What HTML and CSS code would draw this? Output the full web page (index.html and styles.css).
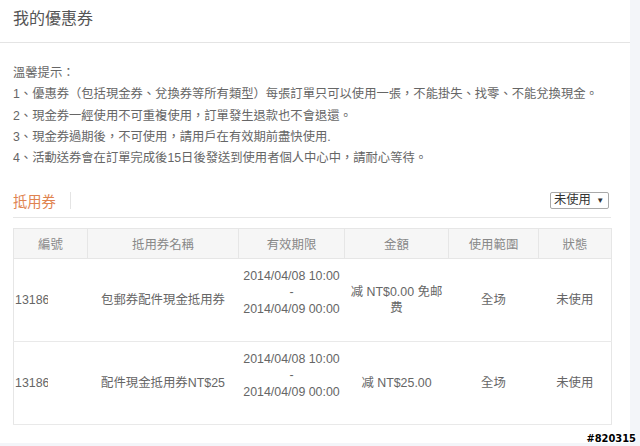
FILE: index.html
```html
<!DOCTYPE html>
<html lang="zh-Hant">
<head>
<meta charset="utf-8">
<title>我的優惠券</title>
<link rel="stylesheet" href="styles.css">
</head>
<body>
<div class="panel">
  <div class="page-head">我的優惠券</div>
  <div class="content">
    <div class="tips">
      <p>溫馨提示：</p>
      <p>1、優惠券（包括現金券、兌換券等所有類型）每張訂單只可以使用一張，不能掛失、找零、不能兌換現金。</p>
      <p>2、現金券一經使用不可重複使用，訂單發生退款也不會退還。</p>
      <p>3、現金券過期後，不可使用，請用戶在有效期前盡快使用.</p>
      <p>4、活動送券會在訂單完成後15日後發送到使用者個人中心中，請耐心等待。</p>
    </div>
    <div class="tabbar">
      <span class="tab">抵用券</span>
      <span class="tab-sep"></span>
      <span class="select">未使用 <span class="arrow">▼</span></span>
    </div>
    <table class="coupons">
      <colgroup>
        <col class="c1"><col class="c2"><col class="c3"><col class="c4"><col class="c5"><col class="c6">
      </colgroup>
      <thead>
        <tr><th>編號</th><th>抵用券名稱</th><th>有效期限</th><th>金額</th><th>使用範圍</th><th>狀態</th></tr>
      </thead>
      <tbody>
        <tr>
          <td class="num"><span class="clip">13186020</span></td>
          <td>包郵券配件現金抵用券</td>
          <td class="date">2014/04/08 10:00<br>-<br>2014/04/09 00:00</td>
          <td class="amt">减 NT$0.00 免邮费</td>
          <td>全场</td>
          <td>未使用</td>
        </tr>
        <tr>
          <td class="num"><span class="clip">13186021</span></td>
          <td>配件現金抵用券NT$25</td>
          <td class="date">2014/04/08 10:00<br>-<br>2014/04/09 00:00</td>
          <td class="amt">减 NT$25.00</td>
          <td>全场</td>
          <td>未使用</td>
        </tr>
      </tbody>
    </table>
  </div>
</div>
<div class="watermark">#820315</div>
</body>
</html>
```
FILE: styles.css
```css
* { box-sizing: border-box; }
html, body { margin: 0; padding: 0; }
body {
  background: #f3f5f9;
  font-family: "Liberation Sans", "Noto Sans CJK TC", sans-serif;
  color: #666;
  width: 640px;
  height: 446px;
  overflow: hidden;
  position: relative;
}
.panel {
  width: 630px;
  height: 443px;
  background: #fff;
}
.page-head {
  height: 43px;
  border-bottom: 1px solid #e4e4e4;
  padding: 0 13px;
  font-size: 16px;
  line-height: 38px;
  color: #555;
}
.content {
  padding: 20px 19px 0 13px;
}
.tips p {
  margin: 0;
  font-size: 12.3px;
  line-height: 21.3px;
  color: #666;
  white-space: nowrap;
}
.tabbar {
  margin-top: 16px;
  height: 33px;
  border-bottom: 1px solid #e6e6e6;
  display: flex;
  align-items: center;
}
.tab {
  font-size: 14.3px;
  color: #e0834f;
  padding-bottom: 2px;
}
.tab-sep {
  width: 1px;
  height: 17px;
  background: #e4e4e4;
  margin-left: 14px;
  margin-bottom: 1px;
}
.select {
  margin-left: auto;
  margin-right: 2px;
  margin-bottom: 1px;
  width: 59px;
  height: 17px;
  border: 1px solid #a9a9a9;
  border-radius: 2px;
  font-size: 12.3px;
  line-height: 15px;
  color: #333;
  padding-left: 3px;
  white-space: nowrap;
}
.select .arrow {
  font-size: 8px;
  vertical-align: 1px;
  margin-left: 2px;
}
.coupons {
  margin-top: 10px;
  width: 598px;
  border-collapse: collapse;
  border: 1px solid #e6e6e6;
  table-layout: fixed;
  font-size: 12.4px;
}
.c1 { width: 74px; }
.c2 { width: 151px; }
.c3 { width: 106px; }
.c4 { width: 104px; }
.c5 { width: 90px; }
.c6 { width: 73px; }
.coupons th {
  background: #f6f6f6;
  color: #888;
  font-weight: normal;
  height: 30px;
  border: 1px solid #e6e6e6;
  padding: 0;
  text-align: center;
}
.coupons td {
  height: 83px;
  border-bottom: 1px solid #e9e9e9;
  text-align: center;
  color: #666;
  padding: 0 4px;
  line-height: 16.5px;
}
.coupons td.num {
  text-align: left;
  padding: 0 0 0 1px;
}
.clip {
  display: block;
  width: 33px;
  overflow: hidden;
  white-space: nowrap;
}
.coupons td.date {
  padding: 0 0 16px 0;
  white-space: nowrap;
}
.coupons td.amt {
  padding: 0 5px;
}
.watermark {
  position: absolute;
  right: 4px;
  bottom: 0;
  font-family: "DejaVu Sans Condensed", "DejaVu Sans", sans-serif;
  font-weight: bold;
  font-size: 11px;
  line-height: 14px;
  color: #000;
  text-shadow: 1px 0 #fff, -1px 0 #fff, 0 1px #fff, 0 -1px #fff;
}
```
